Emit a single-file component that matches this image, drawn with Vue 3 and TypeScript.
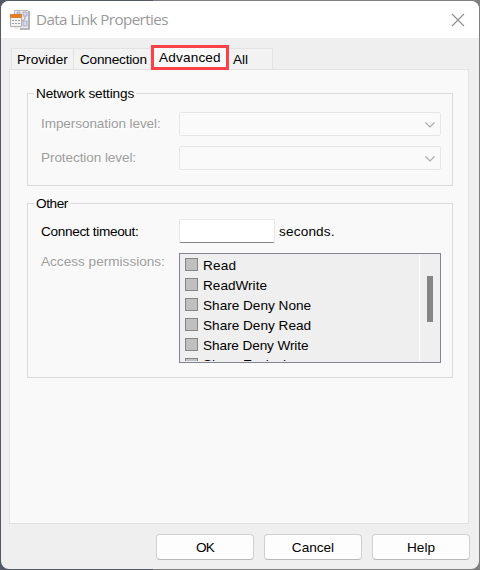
<script setup lang="ts">
import { ref } from 'vue'

const tabs = ['Provider', 'Connection', 'Advanced', 'All']
const activeTab = ref('Advanced')
const networkFields = ['Impersonation level:', 'Protection level:']
const timeout = ref('')
const permissions = ['Read', 'ReadWrite', 'Share Deny None', 'Share Deny Read', 'Share Deny Write', 'Share Exclusive']
const actions = ['OK', 'Cancel', 'Help']
</script>

<template>
  <div class="desktop">
    <section class="dialog">
      <header class="titlebar">
        <svg class="app-icon" width="22" height="22" viewBox="0 0 22 22">
          <path d="M4 1h14l2 2v17H4z" fill="#ececf0" />
          <path d="M4.500 5V1.500H18" fill="none" stroke="#b9b9bd" />
          <path d="M19 2v18H10" fill="none" stroke="#a3a3a7" stroke-width="1.6" />
          <path d="M7 3h3v2H7zM13 3h4v4h-4zM13 12h4v5h-4z" fill="#d5d6e6" stroke="#a6a6b8" stroke-width=".8" />
          <path d="M15 7v3l-3 2" fill="none" stroke="#9c9cae" />
          <path d="M.5 5.500h11v12H.5z" fill="#f5f4f2" stroke="#b3afab" />
          <path d="M0 5h12v4H0z" fill="#e0802f" />
          <path d="M2 11h2v1H2zM5 11h2v1H5zM8 11h2v1H8zM2 14h2v1H2zM5 14h2v1H5zM8 14h2v1H8z" fill="#9da1a7" />
        </svg>
        <h1>Data Link Properties</h1>
        <button class="close" aria-label="Close">
          <svg width="14" height="14" viewBox="0 0 14 14"><path d="M1 1l12 12M13 1L1 13" /></svg>
        </button>
      </header>

      <nav class="tabs">
        <button
          v-for="tab in tabs"
          :key="tab"
          :class="['tab', tab.toLowerCase(), { active: tab === activeTab }]"
          @click="activeTab = tab"
        ><span>{{ tab }}</span></button>
      </nav>

      <main class="panel">
        <section class="group network">
          <h2><span>Network settings</span></h2>
          <div v-for="field in networkFields" :key="field" class="row combo-row">
            <label class="disabled">{{ field }}</label>
            <div class="combo">
              <svg width="10" height="6" viewBox="0 0 10 6"><path d="M.5.500L5 5L9.500.500" /></svg>
            </div>
          </div>
        </section>

        <section class="group other">
          <h2><span>Other</span></h2>
          <div class="row timeout-row">
            <label class="timeout-label">Connect timeout:</label>
            <input v-model="timeout" type="text" />
            <span class="unit">seconds.</span>
          </div>
          <div class="row list-row">
            <label class="disabled">Access permissions:</label>
            <div class="listbox">
              <ul>
                <li v-for="item in permissions" :key="item"><i class="check"></i><span>{{ item }}</span></li>
              </ul>
              <div class="scrollbar"><div class="thumb"></div></div>
            </div>
          </div>
        </section>
      </main>

      <footer class="actions">
        <button v-for="action in actions" :key="action">{{ action }}</button>
      </footer>
    </section>
  </div>
</template>

<style>
body { margin: 0; }
</style>

<style scoped>
* { box-sizing: border-box; }
.desktop {
  width: 480px;
  height: 570px;
  padding: 1px;
  background: linear-gradient(90deg, #535965 0 153px, #7f7f7f 153px);
  font: 13.6px/16px "Liberation Sans", Arial, sans-serif;
  letter-spacing: 0;
  color: #000;
  overflow: hidden;
}
.dialog {
  width: 478px;
  height: 568px;
  border-radius: 8px;
  background: #efefef;
  overflow: hidden;
}
button { font: inherit; letter-spacing: inherit; color: inherit; }
.titlebar {
  height: 37px;
  background: #fff;
  display: flex;
  align-items: center;
  padding: 0 14px 0 9px;
}
.app-icon { flex: none; }
h1 {
  margin: 0 0 2px 4px;
  flex: 1;
  font: 400 15.2px/20px "Open Sans", "Noto Sans", sans-serif;
  letter-spacing: -0.6px;
  color: #999;
}
.close { border: 0; padding: 0; background: none; display: flex; }
.close path { fill: none; stroke: #8f8f8f; stroke-width: 1.1; }
.tabs {
  height: 31px;
  padding: 10px 0 0 10px;
  display: flex;
}
.tab {
  height: 21px;
  padding: 2px 0 0 5px;
  border: 1px solid #e3e3e3;
  border-width: 1px 1px 0 0;
  background: #f2f2f2;
  text-align: left;
  line-height: 16px;
  white-space: nowrap;
}
.provider { width: 63px; border-left-width: 1px; letter-spacing: 0.03px; }
.connection { width: 77px; padding-left: 6px; letter-spacing: -0.2px; }
.advanced {
  width: 78px;
  height: 25px;
  margin-top: -3px;
  padding: 1px 0 0 5px;
  border: 3px solid #fa4248;
  background: #f9f9f9;
  letter-spacing: 0.17px;
  position: relative;
  z-index: 1;
}
.all { width: 44px; padding-left: 4px; }
.panel {
  width: 460px;
  height: 455px;
  margin-left: 8px;
  padding: 23px 15px 0 17px;
  border: 1px solid #e2e2e2;
  background: #f9f9f9;
}
.group {
  width: 426px;
  border: 1px solid #dadada;
  padding-left: 13px;
}
.network { height: 93px; }
.other { height: 175px; margin-top: 17px; }
h2 {
  margin: -8px 0 0 -7px;
  height: 16px;
  font: inherit;
  letter-spacing: -0.15px;
}
.other h2 { letter-spacing: -0.4px; }
h2 span { display: inline-block; padding: 0 2px; background: #f9f9f9; }
.row { display: flex; }
.row label { width: 138px; flex: none; white-space: nowrap; }
.disabled { color: #9d9d9d; text-shadow: 1px 1px #fff; }
.combo-row { height: 24px; margin-top: 10px; }
.combo-row label { padding-top: 4px; letter-spacing: -0.1px; }
.combo {
  width: 262px;
  height: 24px;
  border: 1px solid #e7e7e7;
  border-radius: 2px;
  background: #fafafa;
  display: flex;
  align-items: center;
  justify-content: flex-end;
  padding: 1px 5px 0 0;
}
.combo path { fill: none; stroke: #aaa; stroke-width: 1.15; }
.timeout-row { height: 24px; margin-top: 7px; }
.timeout-row label { padding-top: 5px; letter-spacing: -0.33px; }
input {
  width: 96px;
  height: 24px;
  border: 1px solid #e8e8e8;
  border-bottom-color: #858585;
  border-radius: 2px;
  background: #fff;
  padding: 2px 4px;
  font: inherit;
  outline: none;
}
.unit { padding: 5px 0 0 4px; letter-spacing: 0.17px; }
.list-row { margin-top: 10px; }
.list-row label { padding-top: 1px; }
.listbox {
  width: 262px;
  height: 110px;
  border: 1px solid #82858f;
  background: #efefef;
  display: flex;
  padding: 1px;
}
ul {
  width: 239px;
  height: 106px;
  margin: 0;
  padding: 0 0 0 4px;
  border-right: 1px solid #fff;
  list-style: none;
  overflow: hidden;
}
li { height: 20px; display: flex; align-items: flex-start; padding-top: 3px; white-space: nowrap; }
li:first-child { letter-spacing: 0.2px; }
li:nth-child(5) { letter-spacing: -0.1px; }
.check { width: 13px; height: 13px; border: 1px solid #858585; background: #c0c0c0; flex: none; }
li span { margin: 0 0 0 5px; }
li:last-child span { margin-top: -1px; }
.scrollbar { flex: 1; padding: 21px 0 0 7px; }
.thumb { width: 6px; height: 46px; background: #858585; }
.actions {
  display: flex;
  justify-content: flex-end;
  gap: 10px;
  padding: 10px 9px 0 0;
}
.actions button {
  width: 98px;
  height: 26px;
  border: 1px solid #d0d0d0;
  border-bottom-color: #bababa;
  border-radius: 4px;
  background: #fdfdfd;
  padding: 1px 0 0;
}
.actions button:first-child { letter-spacing: -0.8px; }
</style>
